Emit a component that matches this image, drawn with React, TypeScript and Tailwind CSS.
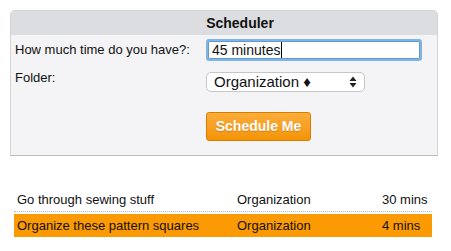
import React from "react";

type Task = {
  name: string;
  folder: string;
  time: string;
  active?: boolean;
};

const tasks: Task[] = [
  { name: "Go through sewing stuff", folder: "Organization", time: "30 mins" },
  { name: "Organize these pattern squares", folder: "Organization", time: "4 mins", active: true },
];

function SelectArrows() {
  return (
    <svg width="8" height="12" viewBox="0 0 8 12" className="fill-[#222]">
      <path d="M4 0.5 L7.5 5 L0.5 5 Z" />
      <path d="M4 11.5 L7.5 7 L0.5 7 Z" />
    </svg>
  );
}

function TaskRow({ task }: { task: Task }) {
  return (
    <div
      className={`flex text-[13px] text-[#111] ${
        task.active
          ? "mt-[2px] h-[23px] items-center bg-[#fc9a04]"
          : "h-[26px] items-start border-b border-dotted border-[#bdbdbd] pt-[4px]"
      }`}
    >
      <div className="w-[223px] pl-[3px]">{task.name}</div>
      <div className="w-[145px]">{task.folder}</div>
      <div>{task.time}</div>
    </div>
  );
}

export default function App() {
  return (
    <div className="h-[251px] w-[451px] bg-white pt-[10px] font-['Liberation_Sans',Arial,sans-serif]">
      <div className="ml-[10px] w-[428px] overflow-hidden rounded-t-[5px] border border-[#d4d4d6] border-b-[#bcbcbc] bg-[#f4f4f6]">
        <div className="flex h-[24px] items-center justify-center bg-[#dcdde0] pl-[32px] text-[14px] font-bold text-[#111]">
          Scheduler
        </div>
        <div className="grid grid-cols-[191px_1fr] px-[4px] pt-[4px] pb-[14px] text-[13px] text-[#111]">
          <div className="flex h-[22px] items-center">How much time do you have?:</div>
          <div className="flex h-[22px] w-[216px] items-center rounded-[3px] border-2 border-[#80b5e3] bg-white pl-[4px] text-[14px] shadow-[inset_0_0_0_1px_#5f9bd0]">
            <span>45 minutes</span>
            <span className="ml-[1px] h-[16px] w-[1px] bg-black" />
          </div>

          <div className="mt-[9px] flex h-[16px] items-center">Folder:</div>
          <div className="mt-[11px] flex h-[20px] w-[159px] items-center justify-between rounded-[5px] border border-[#c6c6c6] bg-white pl-[7px] pr-[7px] text-[15px]">
            <span>Organization ♦</span>
            <SelectArrows />
          </div>

          <div />
          <div className="mt-[20px]">
            <button className="flex h-[29px] w-[105px] items-center justify-center rounded-[3px] border border-[#d97d00] bg-gradient-to-b from-[#fbad38] to-[#f49400] text-[14px] font-bold text-white [text-shadow:0_1px_0_rgba(160,80,0,0.4)]">
              Schedule Me
            </button>
          </div>
        </div>
      </div>

      <div className="ml-[14px] mt-[30px] w-[418px]">
        {tasks.map((t) => (
          <TaskRow key={t.name} task={t} />
        ))}
      </div>
    </div>
  );
}
